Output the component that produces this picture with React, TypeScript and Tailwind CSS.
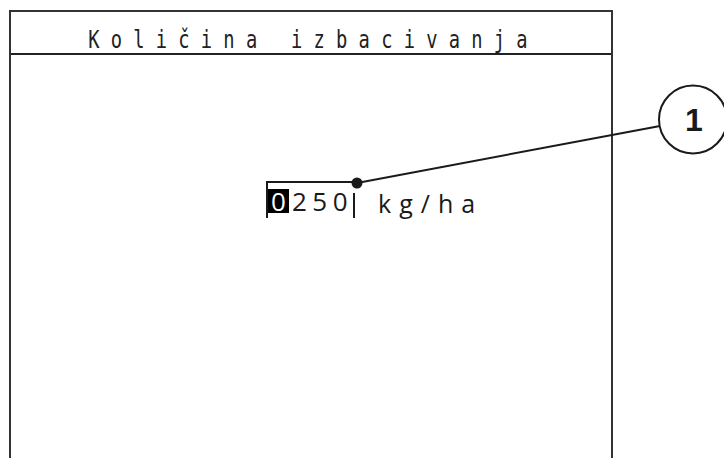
import React from 'react';

const Callout: React.FC = () => (
  <svg className="pointer-events-none absolute left-0 top-0" width={724} height={458} viewBox="0 0 724 458">
    <line x1={357} y1={183} x2={660} y2={126} stroke="#1a1a1a" strokeWidth={2} />
    <circle cx={357} cy={183} r={5.5} fill="#1a1a1a" />
    <circle cx={693} cy={119.5} r={34} fill="white" stroke="#1a1a1a" strokeWidth={2} />
    <text
      x={694}
      y={131}
      textAnchor="middle"
      fontFamily="'Liberation Sans', Arial, sans-serif"
      fontWeight={700}
      fontSize={32}
      fill="#1a1a1a"
    >
      1
    </text>
  </svg>
);

const App: React.FC = () => {
  return (
    <div className="relative h-[458px] w-[724px] overflow-hidden bg-white">
      <div className="ml-[9px] mt-[10px] h-[460px] w-[604px] border-2 border-b-0 border-[#333]">
        <div className="flex h-[43px] items-end justify-center border-b-2 border-[#222] pb-[1px]">
          <span className="ml-[6px] inline-block shrink-0 origin-center scale-x-[0.75] whitespace-nowrap font-['DejaVu_Sans_Mono',monospace] text-[25px] leading-none tracking-[15px] text-[#222]">
            Količina izbacivanja
          </span>
        </div>
        <div className="flex items-start pl-[255px] pt-[126px] font-['Open_Sans',sans-serif] text-[#1a1a1a]">
          <div className="relative flex h-[37px] w-[90px] items-start border-l-2 border-t-2 border-[#1a1a1a]">
            <div className="mt-[6px] flex h-[24px] w-[22px] items-center justify-center bg-black text-[26px] leading-none text-white">
              0
            </div>
            <div className="mt-[6px] pl-[3px] text-[26px] leading-[24px] tracking-[5.5px]">250</div>
            <div className="ml-auto mr-[1px] mt-[10px] h-[25px] w-[2px] bg-[#1a1a1a]" />
          </div>
          <div className="ml-[22px] mt-[10px] text-[25px] leading-[24px] tracking-[8px]">kg/ha</div>
        </div>
      </div>
      <Callout />
    </div>
  );
};

export default App;
